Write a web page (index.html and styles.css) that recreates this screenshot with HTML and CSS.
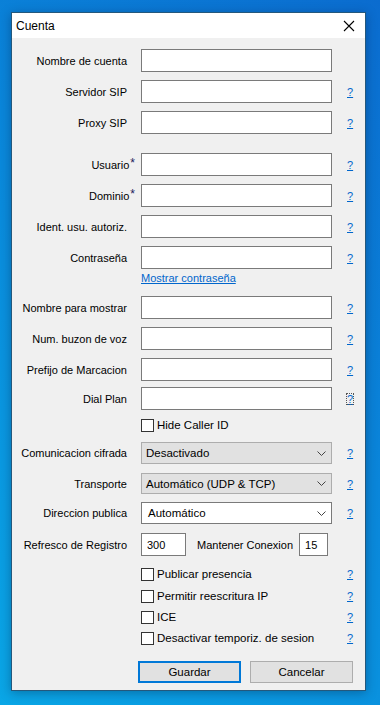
FILE: index.html
```html
<!DOCTYPE html>
<html>
<head>
	<title>Cuenta</title>
	<link rel="stylesheet" href="styles.css">
</head>
<body>
	<div class="dialog">
		<div class="titlebar">
			<span class="title">Cuenta</span>
			<svg class="close" width="12" height="12" viewBox="0 0 12 12"><path d="M1 1 L11 11 M11 1 L1 11" stroke="#000" stroke-width="1.1" fill="none"/></svg>
		</div>
		<div class="form">
			<div class="row first"><label>Nombre de cuenta</label><input type="text"><span></span></div>
			<div class="row"><label>Servidor SIP</label><input type="text"><a class="help">?</a></div>
			<div class="row"><label>Proxy SIP</label><input type="text"><a class="help">?</a></div>

			<div class="row group"><label>Usuario<span class="req">*</span></label><input type="text"><a class="help">?</a></div>
			<div class="row"><label>Dominio<span class="req">*</span></label><input type="text"><a class="help">?</a></div>
			<div class="row"><label>Ident. usu. autoriz.</label><input type="text"><a class="help">?</a></div>
			<div class="row"><label>Contraseña</label><input type="password"><a class="help">?</a></div>
			<div class="row linkrow"><span></span><a class="link">Mostrar contraseña</a><span></span></div>

			<div class="row after-link"><label>Nombre para mostrar</label><input type="text"><a class="help">?</a></div>
			<div class="row"><label>Num. buzon de voz</label><input type="text"><a class="help">?</a></div>
			<div class="row"><label>Prefijo de Marcacion</label><input type="text"><a class="help">?</a></div>
			<div class="row dial"><label>Dial Plan</label><input type="text"><a class="help focused">?</a></div>
			<div class="row check hide-id"><span></span><div class="cb"><span class="box"></span>Hide Caller ID</div><span></span></div>

			<div class="row select-row enc"><label>Comunicacion cifrada</label>
				<div class="select">Desactivado<svg width="9" height="5" viewBox="0 0 9 5"><path d="M0.5 0.5 L4.5 4.5 L8.5 0.5" stroke="#444" fill="none"/></svg></div>
				<a class="help">?</a></div>
			<div class="row select-row trans"><label>Transporte</label>
				<div class="select">Automático (UDP &amp; TCP)<svg width="9" height="5" viewBox="0 0 9 5"><path d="M0.5 0.5 L4.5 4.5 L8.5 0.5" stroke="#444" fill="none"/></svg></div>
				<a class="help">?</a></div>
			<div class="row select-row pub"><label>Direccion publica</label>
				<div class="select white">Automático<svg width="9" height="5" viewBox="0 0 9 5"><path d="M0.5 0.5 L4.5 4.5 L8.5 0.5" stroke="#444" fill="none"/></svg></div>
				<a class="help">?</a></div>

			<div class="row refresh"><label>Refresco de Registro</label>
				<div class="pair"><input class="num" type="text" value="300"><span class="keep">Mantener Conexion</span><input class="num small" type="text" value="15"></div>
				<span></span></div>

			<div class="row check first-check"><span></span><div class="cb"><span class="box"></span>Publicar presencia</div><a class="help">?</a></div>
			<div class="row check c2"><span></span><div class="cb"><span class="box"></span>Permitir reescritura IP</div><a class="help">?</a></div>
			<div class="row check c3"><span></span><div class="cb"><span class="box"></span>ICE</div><a class="help">?</a></div>
			<div class="row check c3"><span></span><div class="cb"><span class="box"></span>Desactivar temporiz. de sesion</div><a class="help">?</a></div>

			<div class="buttons">
				<button class="btn default">Guardar</button>
				<button class="btn">Cancelar</button>
			</div>
		</div>
	</div>
</body>
</html>
```
FILE: styles.css
```css
body {
	margin: 0;
	height: 705px;
	overflow: hidden;
	background: linear-gradient(225deg, #0b6ccf 0%, #0a86da 45%, #0aa6e6 100%);
	font-family: "Liberation Sans", Arial, sans-serif;
	font-size: 11px;
	color: #000;
}

.dialog {
	margin: 12px 0 0 11px;
	width: 353px;
	height: 677px;
	border: 1px solid #24587c;
	background: #f0f0f0;
	box-shadow: 0 2px 10px rgba(0, 30, 60, 0.35);
}

.titlebar {
	height: 25px;
	background: #fff;
	display: flex;
	align-items: center;
	justify-content: space-between;
	padding: 0 10px 0 4px;
}

.title {
	font-size: 12px;
}

.close {
	margin-top: 1px;
}

.form {
	display: flex;
	flex-direction: column;
	padding-top: 11px;
}

.row {
	display: grid;
	grid-template-columns: 115px 191px 1fr;
	column-gap: 14px;
	align-items: center;
	height: 23px;
	margin-top: 8px;
}

.row.first { margin-top: 0; }
.row.group { margin-top: 19px; }
.row.linkrow { height: 16px; margin-top: 1px; }
.row.after-link { margin-top: 10px; }
.row.dial { margin-top: 6px; }
.row.hide-id { margin-top: 8px; }
.row.enc { margin-top: 10px; height: 22px; }
.row.trans { margin-top: 9px; height: 21px; }
.row.pub { margin-top: 8px; height: 22px; }
.row.refresh { margin-top: 9px; }
.row.check { height: 14px; }
.row.first-check { margin-top: 11px; }
.row.c2 { margin-top: 8px; }
.row.c3 { margin-top: 7px; }

.row label {
	text-align: right;
	white-space: nowrap;
}

.req {
	color: #1a1a5a;
	font-size: 12px;
	margin-right: -8px;
	margin-left: 1px;
	position: relative;
	top: -2px;
}

.row input {
	box-sizing: border-box;
	height: 100%;
	width: 100%;
	margin: 0;
	border: 1px solid #7a7a7a;
	background: #fff;
	font-family: inherit;
	font-size: 11px;
	padding: 0 5px;
	outline: none;
}

.help {
	color: #0066cc;
	text-decoration: underline;
	justify-self: start;
	line-height: 12px;
	padding: 0 1px;
}

.help.focused {
	outline: 1px dotted #555;
	outline-offset: -1px;
}

.link {
	color: #0066cc;
	text-decoration: underline;
	white-space: nowrap;
}

.cb {
	display: flex;
	align-items: center;
	white-space: nowrap;
	font-size: 11.5px;
}

.box {
	box-sizing: border-box;
	width: 13px;
	height: 13px;
	border: 1px solid #333;
	background: #fff;
	margin-right: 3px;
}

.select {
	box-sizing: border-box;
	height: 100%;
	display: flex;
	align-items: center;
	justify-content: space-between;
	padding: 0 5px 0 4px;
	background: #e1e1e1;
	border: 1px solid #adadad;
	font-size: 11.5px;
}

.select.white {
	background: #fff;
	border-color: #7a7a7a;
	padding-left: 6px;
}

.pair {
	display: flex;
	align-items: center;
	height: 100%;
	white-space: nowrap;
}

.row .pair input.num {
	width: 45px;
	flex: none;
}

.row .pair input.small {
	width: 29px;
}

.keep {
	margin: 0 6px 0 11px;
}

.buttons {
	display: flex;
	gap: 9px;
	padding-left: 126px;
	margin-top: 16px;
}

.btn {
	box-sizing: border-box;
	width: 103px;
	height: 22px;
	background: #e1e1e1;
	border: 1px solid #adadad;
	font-family: inherit;
	font-size: 11.5px;
	color: #000;
	padding: 0;
}

.btn.default {
	border: 2px solid #0078d7;
}
```
